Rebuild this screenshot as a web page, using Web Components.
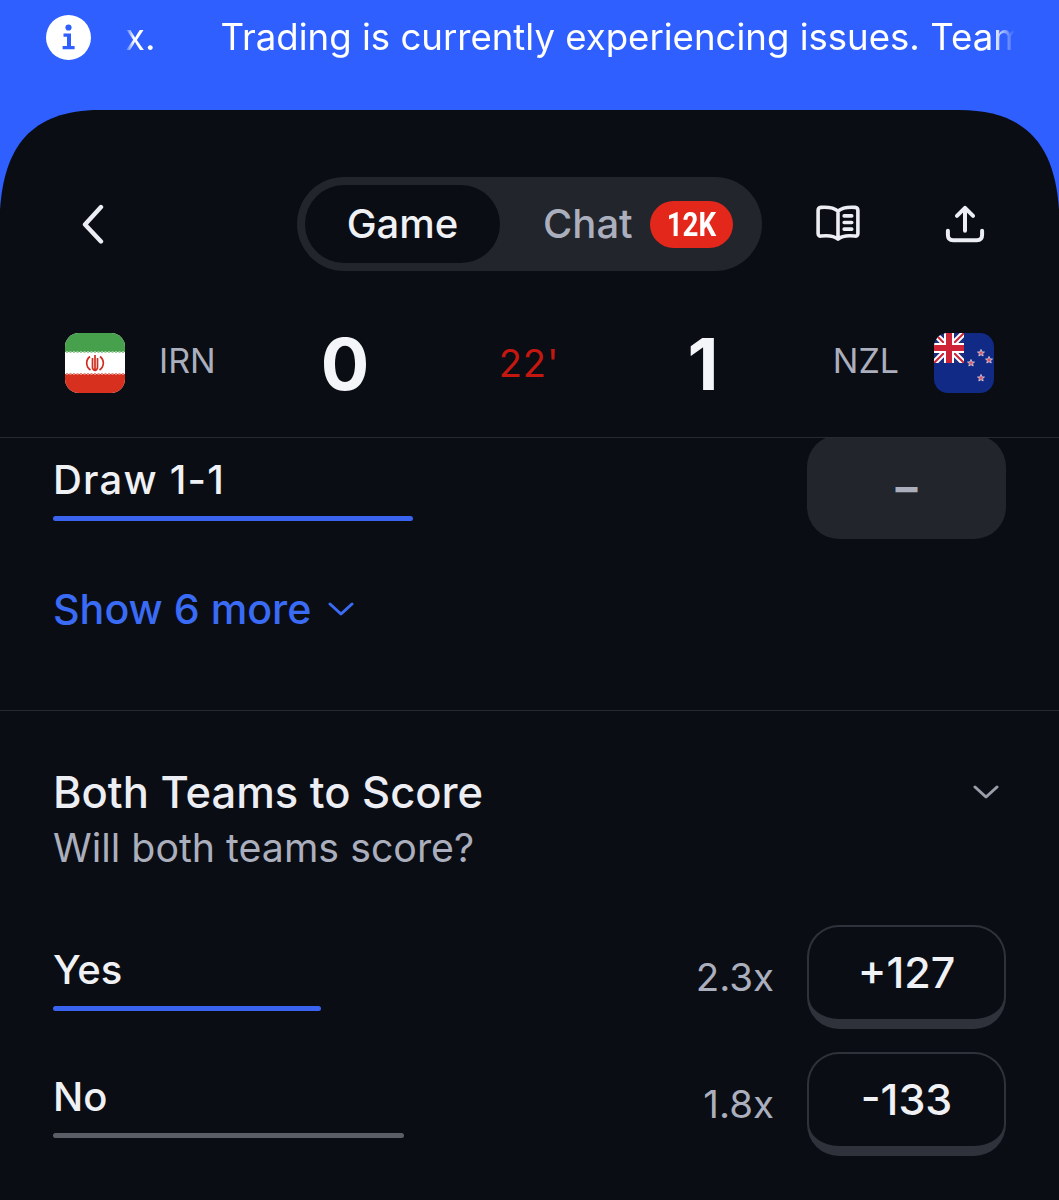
<!DOCTYPE html>
<html>
<head>
<meta charset="utf-8">
<style>
    html, body { margin: 0; background: #2f5fff; }
    body { width: 1059px; height: 1200px; overflow: hidden; font-family: Inter, "Liberation Sans", sans-serif; }
</style>
</head>
<body>
<notice-banner>
    <span>x.</span>
    <span>Trading is currently experiencing issues. Team</span>
</notice-banner>
<game-sheet>
    <game-nav></game-nav>
    <score-bar home="IRN" away="NZL" home-score="0" away-score="1" minute="22'"></score-bar>
    <scroll-area>
        <market-section more="Show 6 more">
            <outcome-row label="Draw 1-1" bar="360" odds="–" disabled></outcome-row>
        </market-section>
        <market-section title="Both Teams to Score" sub="Will both teams score?">
            <outcome-row label="Yes" bar="268" payout="2.3x" odds="+127"></outcome-row>
            <outcome-row label="No" bar="351" payout="1.8x" odds="-133" muted></outcome-row>
        </market-section>
    </scroll-area>
</game-sheet>

<script>
class NoticeBanner extends HTMLElement {
    constructor(){
        super();
        this.attachShadow({ mode: 'open' }).innerHTML = `
        <style>
            :host { display: flex; align-items: flex-start; height: 110px; padding: 15px 44px 0 46px; box-sizing: border-box; color: #fff; }
            svg { flex: none; width: 45px; height: 45px; }
            .track {
                flex: 1;
                display: flex;
                gap: 65px;
                margin-left: 34px;
                overflow: hidden;
                white-space: nowrap;
                font-size: 36.600px;
                line-height: 44px;
                -webkit-mask-image: linear-gradient(90deg, transparent 0, #000 9px, #000 calc(100% - 22px), transparent 100%);
                mask-image: linear-gradient(90deg, transparent 0, #000 9px, #000 calc(100% - 22px), transparent 100%);
            }
            ::slotted(span) { flex: none; }
        </style>
        <svg viewBox="0 0 45 45">
            <circle cx="22.5" cy="22.5" r="22.5" fill="#fff"/>
            <circle cx="22.5" cy="12.5" r="3.1" fill="#2f5fff"/>
            <path d="M17.5 18.5h7.5v12.5h3.6v3.2H16.6V31h4.4v-9.3h-3.5z" fill="#2f5fff"/>
        </svg>
        <div class="track"><slot></slot></div>
        `;
    }
}

class GameSheet extends HTMLElement {
    constructor(){
        super();
        this.attachShadow({ mode: 'open' }).innerHTML = `
        <style>
            /* squircle corners, a plain border-radius is too round here */
            :host {
                display: block;
                height: 1090px;
                background: #0a0d14;
                overflow: hidden;
                clip-path: path("M0 1090V100C4 38 30 0 100 0H959C1029 0 1055 38 1059 100V1090Z");
            }
        </style>
        <slot></slot>
        `;
    }
}

class GameNav extends HTMLElement {
    constructor(){
        super();
        this.attachShadow({ mode: 'open' }).innerHTML = `
        <style>
            :host { display: flex; align-items: center; height: 94px; margin-top: 67px; padding-left: 82px; }
            .back { width: 24px; height: 40px; margin-right: 191px; }
            .pill { display: flex; align-items: center; box-sizing: border-box; width: 465px; height: 94px; padding: 8px; border-radius: 47px; background: #22252c; font-size: 40px; font-weight: 500; }
            .active { display: flex; align-items: center; justify-content: center; box-sizing: border-box; width: 195px; height: 78px; padding-bottom: 2px; border-radius: 39px; background: #0a0d14; color: #f0f1f5; }
            .chat { margin: 0 0 2px 43px; color: #abafbd; }
            .badge { display: flex; align-items: center; justify-content: center; width: 83px; height: 47px; margin-left: 17px; border-radius: 24px; background: #e3281b; color: #fff; }
            .badge span { font-family: Roboto, "Liberation Sans", sans-serif; font-size: 33px; font-weight: 700; transform: scaleX(.84); }
            .book { width: 44px; height: 36px; margin: 0 0 2px 54px; }
            .share { width: 40px; height: 38px; margin-left: 85px; }
            svg { flex: none; fill: none; stroke: #eceef3; stroke-linecap: round; stroke-linejoin: round; }
        </style>
        <svg class="back" viewBox="0 0 24 40" stroke-width="4.400"><path d="M19 3 3 20.500 19 37.500"/></svg>
        <div class="pill">
            <div class="active">Game</div>
            <div class="chat">Chat</div>
            <div class="badge"><span>12K</span></div>
        </div>
        <svg class="book" viewBox="0 0 46 38" stroke-width="3.800">
            <path d="M23 6.500C19 3 12 2 5 2.500 3 2.700 2 3.700 2 5.700V30c0 2 1.300 3 3.200 2.800C12 32 18.500 32.200 23 36c4.500-3.800 11-4 17.800-3.200 1.900.2 3.200-.8 3.200-2.800V5.700c0-2-1-3-3-3.200C34 2 27 3 23 6.500ZM23 7v28.500"/>
            <path d="M29.500 11.500h8M29.500 18.500h8M29.500 25.500h8"/>
        </svg>
        <svg class="share" viewBox="0 0 42 40" stroke-width="4.200">
            <path d="M21 27V4M12.500 11.500 21 3l8.500 8.500"/>
            <path d="M3 27v4.500c0 3.500 2 5.500 5.500 5.500h25c3.500 0 5.500-2 5.500-5.500V27"/>
        </svg>
        `;
    }
}

class TeamFlag extends HTMLElement {
    connectedCallback(){
        const iran = `
            <rect width="60" height="60" fill="#fff"/>
            <rect width="60" height="19" fill="#46a04c"/>
            <rect y="41" width="60" height="19" fill="#d8301f"/>
            <path d="M1 19h58" stroke="#9ccb9e" stroke-width="2" stroke-dasharray="2 1.500"/>
            <path d="M1 41h58" stroke="#e58a7e" stroke-width="2" stroke-dasharray="2 1.500"/>
            <g fill="none" stroke="#cf2f20" stroke-width="1.700">
                <path d="M30 22v16M27.500 25v9.500c0 1.500 1 2.500 2.500 3 1.500-.5 2.500-1.500 2.500-3V25"/>
                <path d="M25 23.500c-4.500 3.500-4.500 10 .5 13.500M35 23.500c4.500 3.500 4.500 10-.5 13.500"/>
            </g>`;
        const star = (x, y) => `<path transform="translate(${x} ${y})" d="M0-3.600 1 -1.100 3.500-1 1.600.6 2.200 3 0 1.700-2.200 3-1.600.6-3.500-1-1-1.100Z" fill="#d8566b" stroke="#e8e4ea" stroke-width=".7"/>`;
        const nz = `
            <rect width="60" height="60" fill="#112a86"/>
            <svg width="30" height="30" viewBox="0 0 30 30">
                <rect width="30" height="30" fill="#1d2f7c"/>
                <path d="M0 0 30 30M30 0 0 30" stroke="#fff" stroke-width="6"/>
                <path d="M0 0 30 30M30 0 0 30" stroke="#cf2438" stroke-width="2"/>
                <path d="M15 0v30M0 15h30" stroke="#fff" stroke-width="10"/>
                <path d="M15 0v30M0 15h30" stroke="#cf2438" stroke-width="6"/>
            </svg>
            ${star(47, 20)}${star(55, 27)}${star(37, 30)}${star(47, 45)}`;
        this.attachShadow({ mode: 'open' }).innerHTML = `
        <style>
            :host { display: block; flex: none; width: 60px; height: 60px; border-radius: 14px; overflow: hidden; }
            svg { display: block; }
        </style>
        <svg width="60" height="60" viewBox="0 0 60 60">${this.getAttribute('code') === 'NZL' ? nz : iran}</svg>
        `;
    }
}

class ScoreBar extends HTMLElement {
    connectedCallback(){
        const a = (n) => this.getAttribute(n);
        this.attachShadow({ mode: 'open' }).innerHTML = `
        <style>
            :host { display: grid; grid-template-columns: 215px 130px 228px 130px 226px; grid-template-rows: 60px; align-items: center; height: 60px; margin-top: 62px; padding: 0 65px 44px; border-bottom: 1px solid #272a31; }
            .team { display: flex; align-items: center; gap: 34px; font-size: 34px; color: #abafbd; }
            .team span { margin-bottom: 6px; }
            .away { justify-content: flex-end; gap: 35px; }
            .score { height: 60px; text-align: center; font-size: 72px; line-height: 62px; font-weight: 700; color: #f4f5f8; }
            .minute { padding-left: 10px; text-align: center; font-size: 38px; letter-spacing: 1px; color: #c4170f; }
        </style>
        <div class="team"><team-flag code="${a('home')}"></team-flag><span>${a('home')}</span></div>
        <div class="score">${a('home-score')}</div>
        <div class="minute">${a('minute')}</div>
        <div class="score">${a('away-score')}</div>
        <div class="team away"><span>${a('away')}</span><team-flag code="${a('away')}"></team-flag></div>
        `;
    }
}

class ScrollArea extends HTMLElement {
    constructor(){
        super();
        this.attachShadow({ mode: 'open' }).innerHTML = `
        <style>
            :host { display: block; overflow: hidden; height: 763px; }
            .inner { margin-top: -3px; }
        </style>
        <div class="inner"><slot></slot></div>
        `;
    }
}

class MarketSection extends HTMLElement {
    connectedCallback(){
        const title = this.getAttribute('title');
        const more = this.getAttribute('more');
        const head = title ? `
            <div class="head">
                <div class="title">${title}</div>
                <svg viewBox="0 0 26 14"><path d="M2 2 13 12 24 2"/></svg>
            </div>
            <div class="sub">${this.getAttribute('sub')}</div>` : '';
        const foot = more ? `
            <div class="more">${more}<svg viewBox="0 0 26 14"><path d="M2 2 13 12 24 2"/></svg></div>` : '';
        this.attachShadow({ mode: 'open' }).innerHTML = `
        <style>
            :host { display: block; padding: 0 53px 0 53px; }
            :host([title]) { padding-top: 56px; }
            :host([more]) { padding-bottom: 77px; border-bottom: 1px solid #272a31; }
            .head { display: flex; align-items: center; justify-content: space-between; padding-right: 7px; height: 50px; }
            .title { font-size: 43.500px; font-weight: 500; color: #eceef3; }
            .sub { margin: 8px 0 54px; font-size: 39.300px; line-height: 46px; color: #abafbd; }
            .rows { display: flex; flex-direction: column; gap: 23px; }
            .more { display: flex; align-items: center; gap: 17px; margin-top: 46px; font-size: 41.200px; line-height: 48px; font-weight: 500; color: #3a6bf5; }
            svg { width: 26px; height: 14px; fill: none; stroke-width: 3; stroke-linecap: round; stroke-linejoin: round; }
            .head svg { stroke: #9a9eaa; }
            .more svg { stroke: #3a6bf5; }
        </style>
        ${head}
        <div class="rows"><slot></slot></div>
        ${foot}
        `;
    }
}

class OutcomeRow extends HTMLElement {
    connectedCallback(){
        const a = (n) => this.getAttribute(n);
        this.attachShadow({ mode: 'open' }).innerHTML = `
        <style>
            :host { display: flex; height: 104px; }
            .label { flex: 1; padding-top: 22px; }
            .name { font-size: 40px; line-height: 46px; font-weight: 500; color: #f0f1f5; }
            :host([disabled]) .name { letter-spacing: 1.200px; }
            .bar { height: 5px; margin-top: 13px; border-radius: 3px; background: #3a63f0; }
            :host([muted]) .bar { background: #5b5e67; }
            .payout { align-self: center; margin-right: 33px; font-size: 38.500px; color: #abafbd; }
            .odds { display: flex; align-items: center; justify-content: center; box-sizing: border-box; width: 199px; height: 104px; padding-bottom: 2px; border: 2px solid #2f323a; border-bottom-width: 10px; border-radius: 32px; background: #0a0d14; font-size: 43px; font-weight: 500; color: #f0f1f5; }
            :host([disabled]) .odds { padding: 0 0 1px; border: 0; background: #22252c; font-size: 44px; font-weight: 700; color: #abafbd; }
        </style>
        <div class="label">
            <div class="name">${a('label')}</div>
            <div class="bar" style="width: ${a('bar')}px"></div>
        </div>
        ${a('payout') ? `<div class="payout">${a('payout')}</div>` : ''}
        <div class="odds">${a('odds')}</div>
        `;
    }
}

customElements.define('notice-banner', NoticeBanner);
customElements.define('game-sheet', GameSheet);
customElements.define('game-nav', GameNav);
customElements.define('team-flag', TeamFlag);
customElements.define('score-bar', ScoreBar);
customElements.define('scroll-area', ScrollArea);
customElements.define('market-section', MarketSection);
customElements.define('outcome-row', OutcomeRow);
</script>
</body>
</html>
